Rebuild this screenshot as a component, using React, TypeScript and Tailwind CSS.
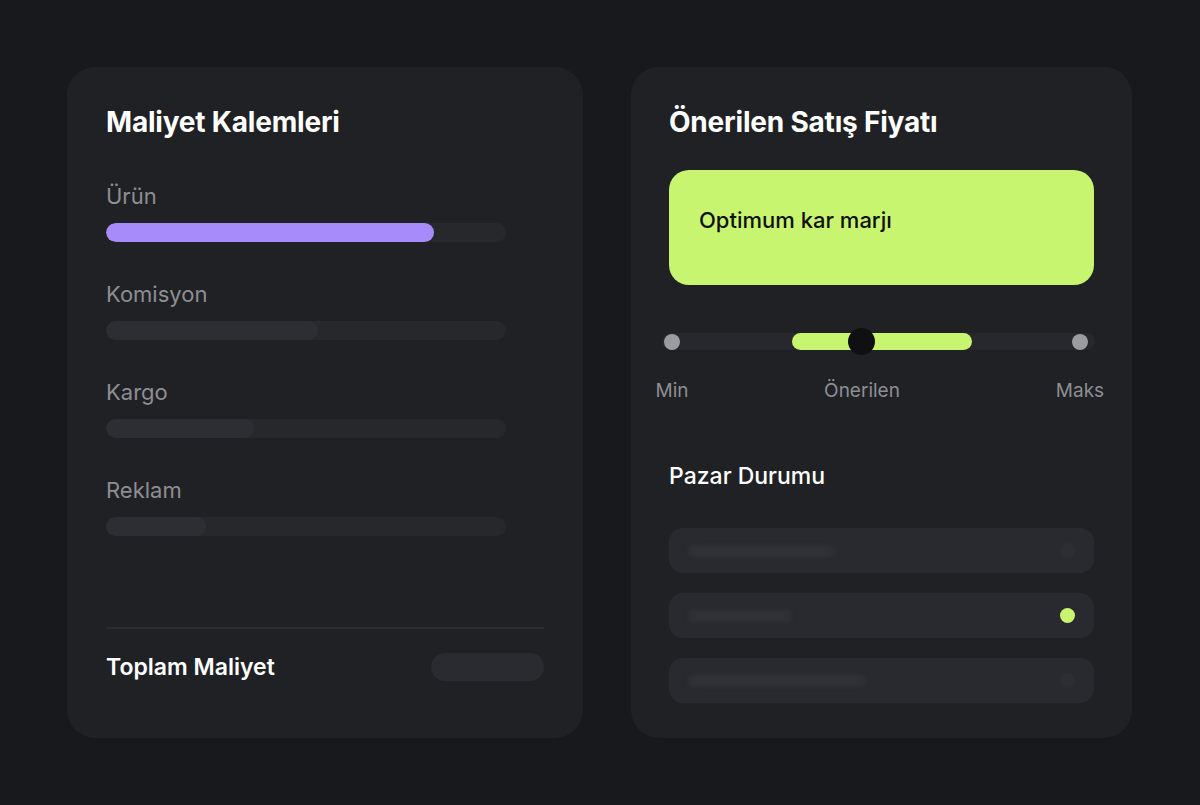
import React from "react";

const costItems = [
  { label: "Ürün", fill: 82, color: "bg-[#a78bfa]" },
  { label: "Komisyon", fill: 53, color: "bg-[#2d2e34]" },
  { label: "Kargo", fill: 37, color: "bg-[#2d2e34]" },
  { label: "Reklam", fill: 25, color: "bg-[#2d2e34]" },
];

const marketRows = [
  { bar: "w-[147px]", active: false },
  { bar: "w-[104px]", active: true },
  { bar: "w-[178px]", active: false },
];

const CostCard = () => {
  return (
    <div className="flex h-[671px] w-[516px] flex-col rounded-[28px] bg-[#202125] pt-[38px] pr-[39px] pb-[57px] pl-[39px]">
      <h2 className="text-[28px] leading-[34px] font-bold tracking-[-0.2px] text-white">
        Maliyet Kalemleri
      </h2>
      <div className="mt-[44px] flex flex-col gap-[39px]">
        {costItems.map((item) => (
          <div key={item.label} className="w-[400px]">
            <div className="text-[22px] leading-[26px] text-[#8e8e93]">{item.label}</div>
            <div className="mt-[14px] h-[19px] w-full overflow-hidden rounded-full bg-[#27282c]">
              <div
                className={`h-full rounded-full ${item.color}`}
                style={{ width: `${item.fill}%` }}
              />
            </div>
          </div>
        ))}
      </div>
      <div className="mt-auto flex items-center justify-between border-t-2 border-[#2b2c31] pt-[24px]">
        <span className="text-[23px] leading-[28px] font-semibold text-white">Toplam Maliyet</span>
        <div className="h-[28px] w-[113px] rounded-full bg-[#2a2b30]" />
      </div>
    </div>
  );
};

const PriceSlider = () => {
  return (
    <div className="-ml-[7px] w-[433px]">
      <div className="relative h-[17px] rounded-full bg-[#27282d]">
        <span className="absolute top-[0.5px] left-[2px] h-[16px] w-[16px] rounded-full bg-[#9b9ba0]" />
        <span className="absolute top-0 left-[130px] h-[17px] w-[180px] rounded-full bg-[#c8f56f]" />
        <span className="absolute -top-[5px] left-[186px] h-[27px] w-[27px] rounded-full bg-[#101012]" />
        <span className="absolute top-[0.5px] right-[7px] h-[16px] w-[16px] rounded-full bg-[#9b9ba0]" />
      </div>
      <div className="relative mt-[29px] h-[24px] text-[19px] leading-[24px] text-[#8e8e93]">
        <span className="absolute left-[10px] -translate-x-1/2">Min</span>
        <span className="absolute left-[200px] -translate-x-1/2">Önerilen</span>
        <span className="absolute left-[418px] -translate-x-1/2">Maks</span>
      </div>
    </div>
  );
};

const PriceCard = () => {
  return (
    <div className="flex h-[671px] w-[501px] flex-col rounded-[28px] bg-[#202125] pt-[38px] pr-[38px] pl-[38px]">
      <h2 className="text-[28px] leading-[34px] font-bold tracking-[-0.2px] text-white">
        Önerilen Satış Fiyatı
      </h2>
      <div className="mt-[31px] h-[115px] rounded-[20px] bg-[#c8f56f] pt-[37px] pl-[30px]">
        <span className="text-[22px] leading-[26px] font-medium text-[#101012]">
          Optimum kar marjı
        </span>
      </div>
      <div className="mt-[48px]">
        <PriceSlider />
      </div>
      <h3 className="mt-[59px] text-[23px] leading-[28px] font-medium text-white">Pazar Durumu</h3>
      <div className="mt-[38px] flex flex-col gap-[20px]">
        {marketRows.map((row, i) => (
          <div
            key={i}
            className="flex h-[45px] items-center justify-between rounded-[14px] bg-[#292a2f] pr-[19px] pl-[19px]"
          >
            <div className={`h-[12px] rounded-full bg-[#303137] blur-[2px] ${row.bar}`} />
            <span
              className={`h-[15px] w-[15px] rounded-full ${row.active ? "bg-[#c8f56f]" : "bg-[#2d2e33]"}`}
            />
          </div>
        ))}
      </div>
    </div>
  );
};

export default function App() {
  return (
    <div
      className="flex h-[805px] w-[1200px] items-start gap-[48px] bg-[#18191d] pt-[67px] pl-[67px]"
      style={{ fontFamily: "Inter, 'Liberation Sans', sans-serif" }}
    >
      <CostCard />
      <PriceCard />
    </div>
  );
}
